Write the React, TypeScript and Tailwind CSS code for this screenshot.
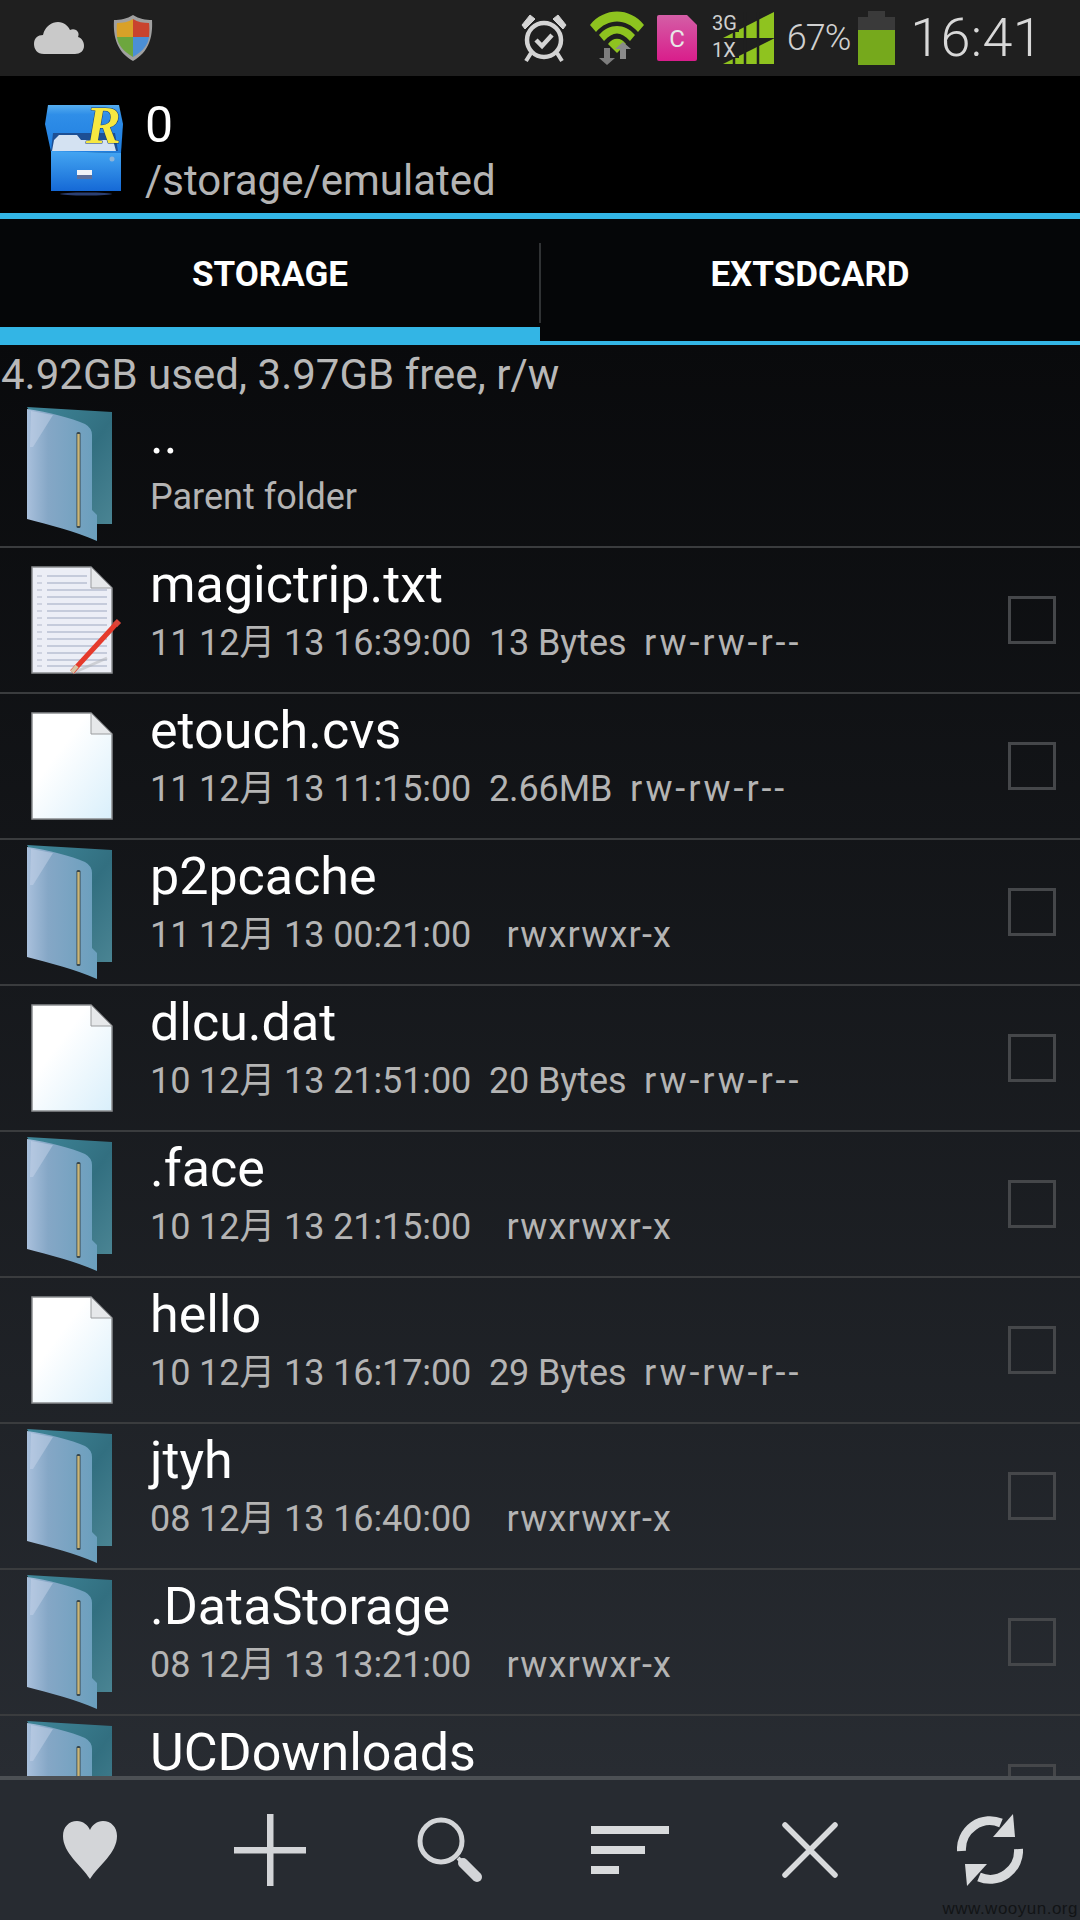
type Entry = { name: string; detail: string; perm: string; kind: "folder" | "blank" | "note" };

const entries: Entry[] = [
  { name: "magictrip.txt", detail: "11 12月 13 16:39:00  13 Bytes  ", perm: "rw-rw-r--", kind: "note" },
  { name: "etouch.cvs", detail: "11 12月 13 11:15:00  2.66MB  ", perm: "rw-rw-r--", kind: "blank" },
  { name: "p2pcache", detail: "11 12月 13 00:21:00    ", perm: "rwxrwxr-x", kind: "folder" },
  { name: "dlcu.dat", detail: "10 12月 13 21:51:00  20 Bytes  ", perm: "rw-rw-r--", kind: "blank" },
  { name: ".face", detail: "10 12月 13 21:15:00    ", perm: "rwxrwxr-x", kind: "folder" },
  { name: "hello", detail: "10 12月 13 16:17:00  29 Bytes  ", perm: "rw-rw-r--", kind: "blank" },
  { name: "jtyh", detail: "08 12月 13 16:40:00    ", perm: "rwxrwxr-x", kind: "folder" },
  { name: ".DataStorage", detail: "08 12月 13 13:21:00    ", perm: "rwxrwxr-x", kind: "folder" },
  { name: "UCDownloads", detail: "", perm: "", kind: "folder" },
];

const FolderIcon = () => (
  <svg width="88" height="135" viewBox="0 0 88 135" className="shrink-0 ml-[27px] mt-[5px]">
    <defs>
      <linearGradient id="fback" x1="0" y1="0" x2="1" y2="1">
        <stop offset="0" stopColor="#3f8699" />
        <stop offset="0.55" stopColor="#326f80" />
        <stop offset="1" stopColor="#4a8493" />
      </linearGradient>
      <linearGradient id="ffront" x1="0" y1="0" x2="1" y2="0">
        <stop offset="0" stopColor="#a9c0dc" />
        <stop offset="0.3" stopColor="#85a7c6" />
        <stop offset="1" stopColor="#6a9fbd" />
      </linearGradient>
    </defs>
    <path d="M0 0 L85 5 L85 117 L68 117 Z" fill="url(#fback)" />
    <path d="M0 2 C22 5 44 11 58 17 Q65 21 65 28 L65 103 L70 108 L70 134 C48 124 22 118 0 112 Z" fill="url(#ffront)" />
    <path d="M4 4 L26 8 L6 40 L3 40 Z" fill="#c6d4ea" opacity="0.5" />
    <rect x="49.5" y="25" width="4" height="96" rx="1.5" fill="#37474d" />
    <rect x="50.3" y="27" width="2.4" height="92" fill="#cbb677" />
  </svg>
);

const DocIcon = ({ note }: { note?: boolean }) => (
  <svg width="92" height="110" viewBox="0 0 92 110" className="shrink-0 ml-[31px] mt-[18px] overflow-visible">
    <defs>
      <linearGradient id="dblank" x1="0" y1="0" x2="1" y2="1">
        <stop offset="0.35" stopColor="#ffffff" />
        <stop offset="1" stopColor="#d9effb" />
      </linearGradient>
    </defs>
    <path
      d="M1 1 L60 1 L81 22 L81 107 L1 107 Z"
      fill={note ? "#eceef6" : "url(#dblank)"}
      stroke="#8b8d90"
      strokeWidth="1.5"
    />
    <path d="M60 1 L60 22 L81 22 Z" fill="#e6e8ea" stroke="#9a9c9e" strokeWidth="1" />
    {note &&
      [10, 17, 24, 31, 38, 45, 52, 59, 66, 73, 80, 87, 94, 100].map((y) => (
        <g key={y}>
          <line x1="16" x2={y < 22 ? 56 : 76} y1={y} y2={y} stroke="#b9bfd2" strokeWidth="1.5" />
          <line x1="6" x2="11" y1={y} y2={y} stroke="#c6cad8" strokeWidth="1.5" />
        </g>
      ))}
    {note && (
      <g>
        <path d="M42 107 L76 92" stroke="#b0b2b6" strokeWidth="3" opacity="0.5" />
        <path d="M41 106 L85 58" stroke="#e53a2c" strokeWidth="5" />
        <path d="M41 106 L46 100" stroke="#d8c7a6" strokeWidth="4" />
        <path d="M84 59 L88 55" stroke="#d9453a" strokeWidth="6" />
      </g>
    )}
  </svg>
);

const RowIcon = ({ kind }: { kind: Entry["kind"] }) =>
  kind === "folder" ? <FolderIcon /> : <DocIcon note={kind === "note"} />;

const AppLogo = () => (
  <svg width="78" height="92" viewBox="0 0 78 92" className="mt-[10px] overflow-visible">
    <defs>
      <linearGradient id="cabTop" x1="0" y1="0" x2="0" y2="1">
        <stop offset="0" stopColor="#56aef0" />
        <stop offset="0.2" stopColor="#2f8ee8" />
        <stop offset="1" stopColor="#1f7ee0" />
      </linearGradient>
      <linearGradient id="cabBody" x1="0" y1="0" x2="0" y2="1">
        <stop offset="0" stopColor="#44a6f2" />
        <stop offset="1" stopColor="#1569d6" />
      </linearGradient>
    </defs>
    <path d="M3 1 L74 1 L78 20 L76 49 L6 48 L0 20 Z" fill="url(#cabTop)" />
    <path d="M8 29 L70 29 L73 47 L6 47 Z" fill="#1d4f94" />
    <path d="M9 36 L14 31 L32 31 L36 36 L68 36 L71 47 L7 47 Z" fill="#d4e2f2" />
    <path d="M6 47 L76 49 L76 87 L6 87 Z" fill="url(#cabBody)" />
    <rect x="32" y="66" width="15" height="9" fill="#f1f3f7" />
    <rect x="32" y="71" width="15" height="4" fill="#5d6f9b" />
    <circle cx="67" cy="55" r="2.5" fill="#8db4d8" />
    <ellipse cx="41" cy="90" rx="26" ry="1.5" fill="#2b3f72" />
    <text
      x="41"
      y="39"
      fontFamily="'Liberation Serif', serif"
      fontStyle="italic"
      fontWeight="700"
      fontSize="52"
      fill="#f7e840"
      stroke="#173a70"
      strokeWidth="1"
      paintOrder="stroke"
    >
      R
    </text>
  </svg>
);

const Cloud = () => (
  <svg width="50" height="34" viewBox="0 0 50 34">
    <path
      d="M10 33 C3 33 0 28 0 23 C0 17 4 14 9 14 C11 5 18 1 24 1 C30 1 34 5 36 9 C38 8 40 8 42 9 C45 11 45 14 44 16 C48 17 50 21 50 25 C50 30 46 33 41 33 Z"
      fill="#c9c9c9"
    />
  </svg>
);

const Shield = () => (
  <svg width="40" height="46" viewBox="0 0 40 46">
    <path d="M20 0 C26 4 33 5 39 5 C40 22 36 37 20 46 C4 37 0 22 1 5 C7 5 14 4 20 0 Z" fill="#a0a0a0" />
    <path d="M20 4 L20 22 L4 22 C3.5 16 3.5 12 4 8 C10 8 15 7 20 4 Z" fill="#d9a128" />
    <path d="M20 4 C25 7 30 8 36 8 C36.5 12 36.5 16 36 22 L20 22 Z" fill="#c9432e" />
    <path d="M4 22 L20 22 L20 42 C10 36 5 30 4 22 Z" fill="#6da63e" />
    <path d="M20 22 L36 22 C35 30 30 36 20 42 Z" fill="#4b8fd6" />
  </svg>
);

const Alarm = () => (
  <svg width="48" height="50" viewBox="0 0 48 50" fill="none" stroke="#d4d4d4">
    <circle cx="24" cy="27" r="17" strokeWidth="4.5" />
    <path d="M16 27 L22 33 L32 22" strokeWidth="4.5" />
    <path d="M2 12 L10 2 L15 6 L5 16 Z" fill="#d4d4d4" strokeWidth="1" />
    <path d="M46 12 L38 2 L33 6 L43 16 Z" fill="#d4d4d4" strokeWidth="1" />
    <path d="M11 40 L6 48 M37 40 L42 48" strokeWidth="4" />
  </svg>
);

const Wifi = () => (
  <svg width="54" height="54" viewBox="0 0 54 54">
    <path d="M0 14 C14 -4 40 -4 54 14 L48 21 C36 7 18 7 6 21 Z" fill="#8ec31f" />
    <path d="M9 24 C19 12 35 12 45 24 L40 30 C31 20 23 20 14 30 Z" fill="#8ec31f" />
    <path d="M18 33 C23 26 31 26 36 33 L27 42 Z" fill="#8ec31f" />
    <path d="M14 37 L20 37 L20 47 L25 47 L17 54 L9 47 L14 47 Z" fill="#7d7d7d" />
    <path d="M30 48 L30 38 L25 38 L33 31 L41 38 L36 38 L36 48 Z" fill="#8a8a8a" />
  </svg>
);

const Sim = () => (
  <svg width="40" height="46" viewBox="0 0 40 46">
    <defs>
      <linearGradient id="simg" x1="0" y1="0" x2="0" y2="1">
        <stop offset="0" stopColor="#d45ea6" />
        <stop offset="1" stopColor="#d91d8b" />
      </linearGradient>
    </defs>
    <path d="M2 0 L30 0 L40 10 L40 44 Q40 46 38 46 L2 46 Q0 46 0 44 L0 2 Q0 0 2 0 Z" fill="url(#simg)" />
    <text x="20" y="32" textAnchor="middle" fontFamily="Roboto, sans-serif" fontSize="24" fill="#e8e8e8">
      C
    </text>
  </svg>
);

const Signal = () => (
  <svg width="62" height="52" viewBox="0 0 62 52">
    <path d="M11 26 L62 0 L62 26 Z" fill="#8fc31f" />
    <path d="M11 52 L62 26.5 L62 52 Z" fill="#8fc31f" />
    <path d="M22 0 V52 M33 0 V52 M46 0 V52" stroke="#1f1f1f" strokeWidth="2.5" />
    <rect x="0" y="0" width="27" height="20" fill="#1f1f1f" />
    <rect x="0" y="26" width="27" height="20" fill="#1f1f1f" />
    <text x="0" y="18" fontFamily="Roboto, sans-serif" fontSize="20" fill="#cfcfcf">
      3G
    </text>
    <text x="0" y="45" fontFamily="Roboto, sans-serif" fontSize="20" fill="#cfcfcf">
      1X
    </text>
  </svg>
);

const Battery = () => (
  <div className="flex flex-col items-center w-[37px] h-[54px]">
    <div className="w-[17px] h-[6px] bg-[#3a3a3a]" />
    <div className="w-full h-[13px] bg-[#3a3a3a]" />
    <div className="w-full flex-1 bg-[#76a91c]" />
  </div>
);

const Heart = () => (
  <svg width="54" height="58" viewBox="0 0 54 58">
    <path d="M27 58 C18 44 0 32 0 15 C0 6 6 0 14 0 C20 0 25 4 27 9 C29 4 34 0 40 0 C48 0 54 6 54 15 C54 32 36 44 27 58 Z" fill="#d3d5d8" />
  </svg>
);

const Plus = () => (
  <svg width="72" height="72" viewBox="0 0 72 72">
    <rect x="33" y="0" width="6.5" height="72" fill="#d3d5d8" />
    <rect x="0" y="33" width="72" height="6.5" fill="#d3d5d8" />
  </svg>
);

const Search = () => (
  <svg width="66" height="66" viewBox="0 0 66 66" fill="none">
    <circle cx="24" cy="24" r="21" stroke="#d3d5d8" strokeWidth="5" />
    <path d="M41 41 L46 46" stroke="#d3d5d8" strokeWidth="4" />
    <path d="M46 46 L60 60" stroke="#d3d5d8" strokeWidth="10" strokeLinecap="round" />
  </svg>
);

const Sort = () => (
  <svg width="78" height="48" viewBox="0 0 78 48">
    <rect x="0" y="0" width="78" height="8" fill="#d8dadc" />
    <rect x="0" y="20" width="54" height="8" fill="#d8dadc" />
    <rect x="0" y="40" width="28" height="8" fill="#d8dadc" />
  </svg>
);

const Close = () => (
  <svg width="56" height="56" viewBox="0 0 56 56">
    <path d="M3 3 L53 53 M53 3 L3 53" stroke="#d8dadc" strokeWidth="5.5" strokeLinecap="round" />
  </svg>
);

const Refresh = () => (
  <svg width="66" height="72" viewBox="0 0 66 72" fill="none">
    <path d="M4.5 37 A28.5 28.5 0 0 1 44 9" stroke="#d8dadc" strokeWidth="9" />
    <path d="M56 0 L58 23 L36 23 Z" fill="#d8dadc" />
    <path d="M61.5 35 A28.5 28.5 0 0 1 22 63" stroke="#d8dadc" strokeWidth="9" />
    <path d="M10 72 L8 50 L30 50 Z" fill="#d8dadc" />
  </svg>
);

export default function App() {
  return (
    <div className="relative w-[1080px] h-[1920px] flex flex-col overflow-hidden bg-black font-['Roboto','Noto_Sans_CJK_SC',sans-serif]">
      {/* status bar */}
      <div className="h-[76px] shrink-0 bg-[#1f1f1f] flex items-center">
        <div className="ml-[34px] flex items-center gap-[29px]">
          <Cloud />
          <Shield />
        </div>
        <div className="ml-auto flex items-center text-[#d0d0d0]">
          <Alarm />
          <div className="ml-[22px]"><Wifi /></div>
          <div className="ml-[13px]"><Sim /></div>
          <div className="ml-[15px]"><Signal /></div>
          <span className="ml-[13px] text-[36px] leading-none font-light tracking-[-1px]">67%</span>
          <div className="ml-[8px]"><Battery /></div>
          <span className="ml-[15px] mr-[37px] text-[54px] leading-none font-light tracking-[0.3px] text-[#d8d8d8]">16:41</span>
        </div>
      </div>

      {/* title */}
      <div className="h-[137px] shrink-0 bg-black flex items-center pl-[45px] gap-[22px]">
        <AppLogo />
        <div className="flex flex-col mt-[17px]">
          <span className="text-[50px] leading-[56px] text-white">0</span>
          <span className="text-[42px] leading-[56px] text-[#b4b4b4]">/storage/emulated</span>
        </div>
      </div>
      <div className="h-[6px] shrink-0 bg-[#33b5e5]" />

      {/* tabs */}
      <div className="h-[126px] shrink-0 bg-[#050608] grid grid-cols-2 relative">
        <div className="flex flex-col">
          <div className="h-[108px] pt-[5px] flex items-center justify-center text-[35px] font-bold text-white">STORAGE</div>
          <div className="h-[18px] bg-[#33b5e5]" />
        </div>
        <div className="flex flex-col">
          <div className="h-[108px] pt-[5px] flex items-center justify-center text-[35px] font-bold text-white">EXTSDCARD</div>
          <div className="mt-auto h-[4px] bg-[#33b5e5]" />
        </div>
        <div className="absolute left-[539px] top-[24px] h-[80px] w-[2px] bg-[#303234]" />
      </div>

      {/* file list */}
      <div className="flex-1 min-h-0 overflow-hidden bg-gradient-to-b from-[#090a0c] to-[#282c32]">
        <div className="h-[57px] pl-[1px] pt-[3px] flex items-center text-[42px] leading-none text-[#b8b8b8]">
          4.92GB used, 3.97GB free, r/w
        </div>
        <div className="h-[146px] flex items-start border-b-2 border-[#3a3c3e]">
          <div className="w-[150px] shrink-0 flex"><FolderIcon /></div>
          <div className="flex-1 flex flex-col pt-[6px]">
            <span className="text-[52px] leading-[56px] text-white">..</span>
            <span className="mt-[11px] text-[36px] leading-[44px] text-[#b4b4b4]">Parent folder</span>
          </div>
        </div>
        {entries.map((e) => (
          <div key={e.name} className="h-[146px] flex items-start border-b-2 border-[#3a3c3e]">
            <div className="w-[150px] shrink-0 flex"><RowIcon kind={e.kind} /></div>
            <div className="flex-1 flex flex-col pt-[9px]">
              <span className="text-[52px] leading-[56px] text-white">{e.name}</span>
              {e.detail && (
                <span className="mt-[8px] text-[36px] leading-[44px] tracking-[-0.1px] text-[#b4b4b4] whitespace-pre">
                  {e.detail}
                  <span className={e.kind === "folder" ? "tracking-[1.2px]" : "tracking-[2.9px]"}>{e.perm}</span>
                </span>
              )}
            </div>
            <div className="mt-[48px] mr-[24px] w-[48px] h-[48px] border-[3px] border-[#45474a]" />
          </div>
        ))}
      </div>

      {/* bottom bar */}
      <div className="h-[144px] shrink-0 bg-[#272b31] border-t-4 border-[#4c5054] grid grid-cols-6 items-center">
        <div className="flex justify-center"><Heart /></div>
        <div className="flex justify-center"><Plus /></div>
        <div className="flex justify-center"><Search /></div>
        <div className="flex justify-center"><Sort /></div>
        <div className="flex justify-center"><Close /></div>
        <div className="flex justify-center"><Refresh /></div>
      </div>

      <span className="absolute right-[2px] bottom-[1px] text-[17px] leading-[20px] tracking-[0.5px] text-[#121416] font-['Liberation_Sans',sans-serif]">
        www.wooyun.org
      </span>
    </div>
  );
}
